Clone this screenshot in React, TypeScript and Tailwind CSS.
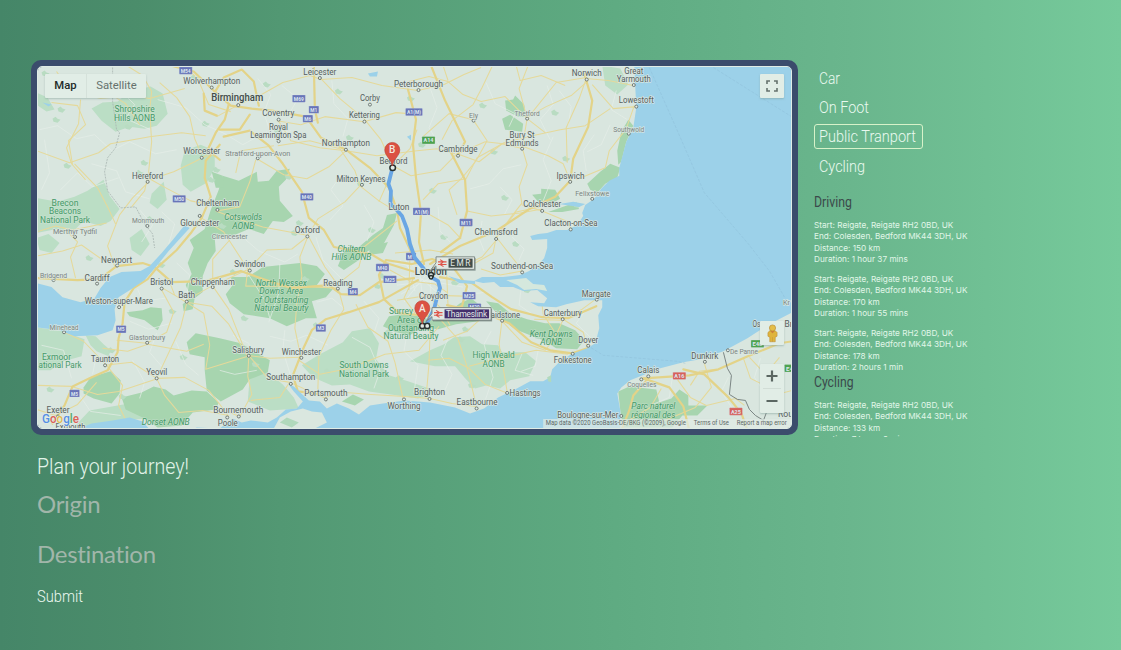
import React from "react";

type Label = [text: string, x: number, y: number, width: number, kind?: string];

const labels: Label[] = [
  ["Wolverhampton", 212, 84, 57], ["Birmingham", 237.5, 101.5, 52, "city"], ["Leicester", 320, 75, 33],
  ["Coventry", 278.5, 116.5, 32], ["Royal", 278.7, 130.5, 19], ["Leamington Spa", 278.5, 138.5, 56],
  ["Stratford-upon-Avon", 258, 156, 65, "minor"], ["Northampton", 346, 146, 48], ["Corby", 370, 101.5, 20],
  ["Kettering", 364.5, 118.5, 31], ["Peterborough", 418.5, 87.5, 49], ["Bedford", 393.5, 164.5, 28],
  ["Milton Keynes", 361, 182, 49], ["Luton", 399, 210, 21], ["Cambridge", 458, 152, 39], ["Ely", 473.5, 118.5, 9, "minor"],
  ["Thetford", 527, 116.5, 25, "minor"], ["Bury St", 522, 138, 25], ["Edmunds", 522, 145.8, 33],
  ["Norwich", 586.5, 76.5, 30], ["Great", 633.5, 74.5, 19], ["Yarmouth", 633.5, 82.5, 34], ["Lowestoft", 636, 103.5, 35],
  ["Southwold", 628.5, 132, 31, "minor"], ["Ipswich", 570.3, 179, 28], ["Felixstowe", 592, 196.5, 34, "minor"],
  ["Colchester", 542, 207, 38], ["Clacton-on-Sea", 570.7, 226.5, 53], ["Chelmsford", 496, 235.5, 43],
  ["Southend-on-Sea", 522, 269, 62], ["Margate", 596, 297, 29], ["Canterbury", 562.5, 316, 38],
  ["Maidstone", 502, 317.5, 36], ["Dover", 588, 342.5, 20], ["Folkestone", 572.5, 362.5, 38],
  ["Hastings", 525, 395.8, 31], ["Eastbourne", 477, 404.5, 41], ["Brighton", 429.5, 395, 31], ["Worthing", 404, 408.5, 33],
  ["Croydon", 433.5, 299, 29], ["London", 430.7, 275, 32, "city"], ["Worcester", 202, 154.5, 37],
  ["Hereford", 148, 179, 31], ["Monmouth", 148.5, 223, 32, "minor"], ["Merthyr Tydfil", 75.5, 233.8, 44, "minor"],
  ["Cheltenham", 218, 206.5, 43], ["Gloucester", 200, 226, 39], ["Cirencester", 230, 239.5, 36, "minor"],
  ["Oxford", 307.5, 233, 25], ["Newport", 117, 262.5, 31], ["Bridgend", 54, 277.5, 27, "minor"], ["Cardiff", 97.5, 280.5, 25],
  ["Bristol", 162, 285, 23], ["Chippenham", 213, 284.5, 44], ["Bath", 187, 298, 17], ["Swindon", 250, 267, 31],
  ["Reading", 338, 285.5, 29], ["Weston-super-Mare", 119.2, 304, 68], ["Minehead", 64.5, 330, 29, "minor"],
  ["Glastonbury", 147.5, 340, 36, "minor"], ["Taunton", 105.5, 362, 28], ["Yeovil", 157, 375, 21],
  ["Salisbury", 248.5, 352.5, 32], ["Winchester", 301.5, 354.5, 39], ["Southampton", 291, 380, 49],
  ["Portsmouth", 326, 395.5, 43], ["Bournemouth", 238.5, 412.5, 50], ["Poole", 228, 426, 20], ["Exeter", 58.5, 412.8, 23],
  ["Exmouth", 71, 429.5, 30], ["Calais", 648, 372.5, 22], ["Coquelles", 641.5, 387, 29, "minor"],
  ["Dunkirk", 704.5, 358.5, 27], ["De Panne", 743.5, 353.5, 28, "minor"], ["Boulogne-sur-Mer", 587.5, 418, 61],
  ["Os", 756, 327, 8], ["Br", 788, 327, 8], ["Kr", 786, 304.5, 7, "minor"], ["Rou", 785, 417, 15],
  ["Shropshire", 135, 112.5, 40, "park"], ["Hills AONB", 135, 121, 41, "park"],
  ["Brecon", 65.5, 206.5, 27, "park"], ["Beacons", 65.5, 214.5, 32, "park"], ["National Park", 65.5, 223, 50, "park"],
  ["Exmoor", 57, 359.5, 29, "park"], ["ational Park", 60.5, 368, 43, "park"],
  ["Cotswolds", 243.5, 220.5, 38, "italic"], ["AONB", 243.5, 229, 22, "italic"],
  ["Chiltern", 351.5, 251.5, 28, "italic"], ["Hills AONB", 351.5, 260, 40, "italic"],
  ["North Wessex", 281.5, 285.5, 51, "italic"], ["Downs Area", 281.5, 294, 44, "italic"],
  ["of Outstanding", 281.5, 302.5, 54, "italic"], ["Natural Beauty", 281.5, 310.8, 54, "italic"],
  ["Surrey", 401, 314, 24, "park"], ["Area of", 411, 322.5, 28, "park"],
  ["Outstanding", 411, 330.8, 46, "park"], ["Natural Beauty", 411, 339, 55, "park"],
  ["South Downs", 364, 368, 49, "park"], ["National Park", 364, 376.3, 50, "park"],
  ["High Weald", 493.5, 358, 42, "park"], ["AONB", 493.5, 366.3, 22, "park"],
  ["Kent Downs", 551, 336.5, 43, "italic"], ["AONB", 551, 345, 22, "italic"], ["Dorset AONB", 166, 425, 48, "italic"],
  ["Parc naturel", 653, 409, 44, "italic"], ["régional des", 653, 417.3, 44, "italic"],
];

const towns: [number, number][] = [
  [212, 88], [238.5, 105.5], [320, 78.5], [278.8, 120], [278.8, 141.5], [258, 158.5], [346, 150], [370, 105], [364.5, 122],
  [418.5, 90.5], [362, 185], [458, 156], [473.5, 121], [527, 119], [522, 149], [586.5, 80], [633.5, 85.5], [636, 107],
  [628.5, 134], [570, 182], [592, 199], [542, 211], [570.5, 229.5], [496, 239], [522, 272.3], [596.5, 299.5], [562.5, 319],
  [502, 320.5], [588, 345.5], [572.5, 353.5], [507, 392.5], [476.5, 408], [429.5, 398.5], [404, 399], [202, 158],
  [148, 182], [147.7, 226], [75.5, 237], [217.7, 210], [200, 216], [307.5, 236.5], [117.5, 265.5], [54, 280], [97.5, 283.5],
  [162, 288.5], [213, 287], [187, 301.5], [250, 270.5], [338, 288.5], [119.5, 307], [64.5, 332], [147.5, 342.5], [105.5, 365],
  [157, 378], [249, 355.5], [301.5, 357.5], [291, 383.5], [326, 399], [239, 416], [227.5, 417], [648, 376], [641, 379],
  [704.5, 361.5], [727.5, 350], [621, 415.5], [58.5, 416],
];

const water = [
  "M634 66L635 88L636 108L633 128L626 142L622 157L619 168L619 176L609 181L601 189L594 199L585 205L582 213L583 216L577 225L567 230L556 230L547 233L538 234L530 236L532 240L547 239L547 248L544 258L538 265L529 271L520 275L503 277L482 277L474 281L483 283L494 282L500 287L513 287L523 291L537 290L547 298L544 303L530 302L538 306L556 307L566 304L584 300L602 300L602 307L598 315L599 328L595 343L587 348L571 354L560 361L552 369L550 377L543 381L530 381L513 390L498 397L484 408L470 413L455 407L430 402L405 400L383 403L370 405L359 414L349 408L337 403L327 408L320 401L309 400L294 386L288 383L294 391L303 401L297 408L286 409L277 417L268 422L251 420L242 422L233 418L220 428L197 427L190 430H620L620 410L617 393L621 387L630 380L645 374L660 368L683 362L700 359L723 351L747 338L767 325L792 312V66Z",
  "M37 283L52 287L63 297L81 302L95 298L101 288L110 277L122 272L141 271L150 266L162 253L173 240L185 225L190 228L179 240L169 251L157 266L145 280L132 289L119 297L115 309L116 320L113 330L98 335L75 336L60 330L37 327Z",
  "M75 430L92 423L113 420L130 417L143 421L151 430Z",
];

const greens = [
  "M92 109L103 103L118 102L130 92L151 87L163 94L168 114L157 126L145 129L130 127L116 132L102 121Z",
  "M37 198L58 202L75 197L88 191L104 180L110 196L120 209L111 221L101 226L84 221L72 233L57 229L37 233Z",
  "M185 151L201 145L215 151L215 168L207 183L191 192L183 185L181 166Z",
  "M152 194L164 182L167 200L158 209L150 203Z",
  "M37 327L63 331L85 339L82 356L64 361L51 370L37 370Z",
  "M86 335L96 336L104 344L111 350L109 356L97 351L91 345Z",
  "M302 365L320 354L343 342L352 331L370 328L379 343L376 359L389 375L408 381L438 391L418 398L391 394L369 391L350 384L332 385L313 377Z",
  "M250 376L268 372L283 384L294 397L299 408L270 410L248 401Z",
  "M444 344L454 337L470 336L482 344L498 345L502 352L525 352L536 361L529 376L510 380L500 388L486 385L475 388L465 378L455 366L435 366L410 361L430 350Z",
  "M90 410L118 405L135 402L160 405L150 418L118 420L99 428L76 425Z",
  "M37 93L48 98L55 110L47 112L37 105Z",
  "M130 238L142 229L150 244L141 256L132 250Z",
  "M37 238L49 234L60 243L52 253L40 250Z",
  "M602 66L620 69L628 85L617 95L605 86Z",
];
const deepGreens = [
  "M219 190L223 176L239 181L257 172L258 182L269 181L277 171L290 169L286 180L279 187L280 201L293 216L284 222L273 221L264 234L249 229L230 237L215 238L216 251L208 263L203 276L203 292L195 298L193 309L184 311L183 304L191 297L186 285L192 274L188 263L194 248L190 240L205 229L211 210Z",
  "M226 294L233 285L231 277L248 277L263 267L300 263L317 266L325 274L317 285L333 289L326 297L312 301L317 318L306 318L287 326L270 318L244 314L230 303Z",
  "M187 342L196 333L220 338L241 343L270 360L268 372L250 379L243 389L221 401L207 390L205 370L205 357L190 354Z",
  "M122 397L142 392L154 386L166 389L174 395L192 390L207 391L219 402L216 409L193 412L182 425L158 427L145 418L126 409Z",
  "M84 387L91 377L111 371L121 380L120 393L112 403L94 398L84 393Z",
  "M127 312L143 310L151 307L162 308L163 320L158 330L145 320L130 316Z",
  "M338 266L344 251L359 247L373 235L383 228L387 215L397 213L394 225L383 245L368 251L359 260L344 270Z",
  "M383 326L389 316L403 314L419 316L435 321L447 313L460 303L471 298L486 310L478 321L456 324L438 329L421 327L410 335L396 332Z",
  "M486 301L498 303L510 313L527 319L545 323L559 323L575 330L584 340L577 349L556 348L543 340L530 335L515 329L502 319Z",
  "M587 184L600 172L610 164L620 168L617 178L605 184L597 193L590 190Z",
  "M532 195L541 194L541 189L555 190L560 199L550 204L538 202Z",
  "M505 101L513 100L515 96L524 105L526 117L518 117L506 111Z",
  "M502 119L510 115L523 124L522 132L505 130Z",
  "M618 391L629 386L656 389L659 402L671 398L679 389L688 395L688 405L707 405L697 415L682 415L672 427H623L620 410Z",
  "M342 401L353 394L364 399L355 405Z",
  "M628 120L633 126L626 142L621 162L618 165L617 151L621 132Z",
  "M212 172L223 176L224 188L216 188Z M370 247L388 242L383 253L369 255Z M548 212L568 205L575 204L579 209L562 212Z",
];

const motorways = [
  "M171 66L194 72L214 91L231 106L252 109L272 111L306 117L321 138L346 150L370 168L389 188L397 210L400 228L408 245L416 263",
  "M220 160L208 150L216 133L225 120L229 105",
  "M216 91L224 78L242 70L254 82L259 106M250 115L240 130L220 130",
  "M224 137L250 131L269 146L283 164L302 192L309 218L324 230L334 247L371 254L386 263L415 272",
  "M220 145L206 161L205 178L211 197L202 218L192 232L177 250L157 268L148 279L134 288L125 302L123 323L119 338L118 352L108 370L90 378L73 386L65 405L53 423",
  "M37 278L78 280L100 279L117 266L143 263L155 267L172 282L206 281L241 271L269 281L292 288L329 285L341 294L360 295L379 282L414 278",
  "M418 280L379 302L349 312L326 319L312 330L304 347L293 375L298 391L323 394",
  "M412 264L386 260L379 275L384 299L399 313L432 316L462 306L467 286L453 267L432 259Z",
  "M408 90L416 120L413 145L416 178L421 213L419 242L424 264",
  "M450 151L465 180L467 211L460 238L441 252",
  "M440 277L472 283L492 297L511 309L542 317L568 318L596 306",
  "M447 305L487 314L509 323L531 342L550 350L572 353L587 348",
  "M430 264L460 246L496 231L531 208L555 197L570 181L573 159L588 127L592 101L584 74",
  "M431 66L445 101L465 142L458 154",
  "M643 378L689 375L718 369L745 357L779 343L792 341",
  "M643 378L669 387L683 406L689 430M683 369L704 374L728 397L741 413L747 430",
  "M648 378L633 395L629 410L621 430M204 94L205 111L217 116M314 66L315 110L318 123",
];
const roads = [
  "M37 151L70 163L99 153L111 144L150 137L182 133L206 136M73 165L69 141L86 125L78 106L52 103M75 164L98 188L108 207L116 224M37 232L56 226L73 230L107 223",
  "M127 66L143 76L152 92L150 110L152 142L149 172L145 191L132 207M147 181L174 172L195 162L214 152M148 178L168 189L191 201L211 205M148 183L133 198L120 215L108 246L115 266",
  "M160 83L177 98L190 117L195 139L202 155M184 66L198 79L209 105L231 112M185 89L150 99L130 96L101 99L70 91L57 72",
  "M81 100L79 124L67 148L72 164L86 180M98 75L110 94L126 104L140 125M64 228L78 242L71 257L76 278M37 256L63 251L82 245L106 262",
  "M217 117L239 105L260 96L283 83L310 76L321 80L352 78L382 86L418 91L444 85L464 75L481 68M277 121L301 125L325 117L364 122L396 113L421 115",
  "M321 79L340 99L364 119L381 140L392 164M279 122L291 141L320 148L346 151L377 156L417 151M278 146L310 141L340 149L355 171L360 186L379 201L397 212",
  "M257 159L284 175L307 179L329 167L346 151M360 186L345 202L318 219L307 237L292 249L267 250L248 270M216 211L238 219L263 227L306 235",
  "M236 173L241 151L274 146M256 160L250 182L240 207L217 211M200 217L224 232L248 269L246 286L299 286L338 288M307 239L300 257L302 276L297 303L295 328L301 357",
  "M230 240L213 259L213 286L229 309L247 355M187 302L212 306L229 324L247 355L270 358L301 357M187 303L181 327L157 378M162 290L174 312L167 332L147 343L117 340",
  "M163 288L185 301L210 287L247 270M170 282L175 295L204 313L210 345L206 369L248 356M103 348L128 351L148 344L187 351L204 344M105 365L132 362L157 378L185 377L209 390L228 414",
  "M157 378L165 395L179 412L203 410L229 415M129 425L119 405L123 385L107 365L84 341L65 332M38 385L72 386L98 394L119 391L156 379M37 409L56 415L78 404L97 382",
  "M249 356L248 376L252 394L240 416L215 406M249 355L268 378L290 382L324 397L346 392L371 394L405 396L430 398L452 403L476 406",
  "M289 383L280 397L251 400M299 360L320 374L350 368L385 354L419 350L439 326M356 304L368 327L388 341L395 362L403 398M338 287L344 309L331 330L319 356L318 389",
  "M427 311L430 333L429 363L426 398M428 360L449 358L469 368L485 384L508 393M440 319L458 339L466 363L476 404M469 366L499 358L536 350L568 354M502 319L499 344L507 391",
  "M502 321L522 342L545 350L555 337L563 319L583 332L587 347M487 313L467 331L443 340M563 319L582 309L597 298M534 319L561 320L582 313M542 305L543 314L554 331",
  "M338 285L325 267L309 237M339 283L359 267L364 247L397 221M379 202L387 184L393 166L410 149L417 130M393 166L411 176L440 171L457 154L479 162L502 144L523 149",
  "M442 140L452 121L473 105L482 88L492 67M423 137L449 114L473 120L487 141L476 161L462 178M458 154L485 142L521 146L548 156L563 164L570 181M527 119L522 148L527 165L519 187L522 205L542 211",
  "M417 151L437 149L455 154M423 200L438 184L466 179L477 158L504 143L532 136L560 130L585 126L610 109M586 78L556 83L527 119M528 66L519 89L527 119L545 133",
  "M586 79L579 99L566 128L567 163M586 79L608 81L633 86M636 107L613 109L592 85M634 106L626 129L609 151L605 168L576 180M542 211L566 221L571 229M540 207L516 212L496 237L522 270",
  "M467 211L491 216L520 213L542 209M475 263L493 253L496 238L511 217L522 203M481 269L500 275L522 271M423 211L448 225L461 239M497 239L482 257L465 265M457 215L449 190L462 178",
  "M409 82L429 77L448 82L463 95L481 102L505 97L526 118L546 107L571 96L588 81M448 81L443 66M516 66L520 81L541 76L565 86",
  "M427 295L440 307L450 325M414 277L404 298L415 313M390 270L410 281L435 284L448 293M395 253L430 250L453 254M410 254L409 290M446 259L448 306M397 300L430 295L463 296",
  "M677 379L690 397L706 405L735 398L744 405M704 363L711 387L695 407L662 421M743 358L750 378L780 393L792 390M749 357L765 374L779 357M661 388L650 407L630 419M715 369L699 371L690 385",
];
const minor = [
  "M40 130L58 126L77 139L95 135L112 151L130 142L156 154L177 150M120 90L135 105L126 119L151 130M92 164L117 171L126 192L150 199M61 190L78 173L93 187L119 178M45 140L50 173L42 190",
  "M158 100L186 108L205 125L225 134L243 145L267 132M258 79L271 95L264 113L271 134L291 131M282 86L298 99L290 113M332 81L334 104L348 119L343 137M342 174L331 190L343 206L330 220",
  "M364 205L374 222L367 241M245 239L259 251L285 262L298 254M236 260L249 275L265 300L270 318M280 264L279 293L269 322M316 237L323 260L341 278M317 302L332 298L345 309",
  "M430 88L437 108L429 128L439 145M486 83L495 104L515 114L509 127M547 86L553 105L540 120L550 140M553 137L543 160L551 181L541 206M470 189L489 184L503 169L521 165M500 187L512 200L504 215",
  "M438 207L440 231L450 242M482 221L479 238L484 251M512 237L524 249L519 260M458 276L472 294L486 292M521 288L519 305L535 316M587 308L576 323L591 338M538 350L535 366L521 371",
  "M364 301L379 318L374 333M352 337L370 347L380 371L374 388M407 333L404 351L418 365L414 392M448 338L441 355L452 374L443 394M491 331L484 344L493 377L484 403M522 353L515 370L533 375",
  "M270 336L291 341L307 335L328 345M285 330L283 350L291 376M233 335L249 343L251 352M220 370L235 374L257 370M157 333L150 352L162 366M176 341L186 364L199 375M133 360L145 382L140 398",
  "M130 321L149 329L172 323M138 289L143 301L166 298M177 263L190 275L187 296M140 210L153 225L142 242M162 212L175 224L169 244M42 345L64 350L72 378M97 354L93 374M78 392L91 411L121 415",
  "M672 377L669 397L650 405M728 377L721 391L735 413M760 358L754 377L765 394M610 125L601 145L587 152M616 91L611 110L627 120M559 91L571 107L568 125M594 135L583 151L586 171",
  "M406 260L415 291M418 260L423 300M430 258L431 304M394 263L454 272M392 274L463 287M397 285L450 279M401 294L455 264M400 260L446 300M440 257L404 302",
];

const shields: [string, number, number, string?][] = [
  ["M54", 186, 71], ["M69", 299, 99], ["M1", 314, 110], ["M6", 308, 119], ["M40", 307, 197], ["M50", 179.5, 199],
  ["A1(M)", 414, 112.3], ["A14", 428.5, 140.5, "#4da34d"], ["A1(M)", 421.5, 211.5], ["M11", 466, 222.5], ["M1", 411, 256.5],
  ["M40", 382.5, 267.5], ["M25", 390, 279.3], ["M4", 353, 291.5], ["M3", 321, 327.8], ["M5", 121.5, 329], ["M5", 75, 393],
  ["M25", 469, 295.5], ["M20", 474.5, 307], ["A16", 679, 375.5, "#d7605b"], ["A25", 735.5, 411, "#d7605b"],
  ["E40", 757, 343.5, "#4da34d"], ["E4", 789, 368, "#4da34d"],
];

const kinds: Record<string, string> = {
  town: "fill-[#56605d] text-[8.6px]",
  minor: "fill-[#7b8582] text-[7.8px]",
  city: "fill-[#414b48] text-[10px] font-medium",
  park: "fill-[#459a68] text-[8.6px]",
  italic: "fill-[#459a68] text-[8.6px] italic",
};

function Pin({ x, y, letter }: { x: number; y: number; letter: string }) {
  return (
    <g>
      <path d={`M${x} ${y + 16}C${x - 1} ${y + 9} ${x - 7.5} ${y + 6} ${x - 7.5} ${y}A7.5 7.5 0 0 1 ${x + 7.5} ${y}C${x + 7.5} ${y + 6} ${x + 1} ${y + 9} ${x} ${y + 16}Z`} fill="#db5143" stroke="#b94338" strokeWidth=".6" />
      <text x={x} y={y + 3.4} textAnchor="middle" className="fill-[#f2e8e0] text-[10px] font-medium">{letter}</text>
    </g>
  );
}

function RailTag({ x, y, w, name, dark, spacing }: { x: number; y: number; w: number; name: string; dark: string; spacing: number }) {
  return (
    <g>
      <rect x={x + 1} y={y + 1.3} width={w} height="12.5" fill="#52625f" opacity=".6" />
      <path d={`M${x} ${y}H${x + w}V${y + 12.5}H${x}V${y + 9}L${x - 6} ${y + 14}L${x} ${y + 6}Z`} fill="#e1e9e4" stroke="#78837f" strokeWidth=".9" />
      <path d={`M${x + 2} ${y + 5}h8.5M${x + 2} ${y + 7.6}h8.5M${x + 4} ${y + 2.8}l3.5 2.2l-3.5 2.6l3.5 2.2`} fill="none" stroke="#df5348" strokeWidth="1.1" />
      <rect x={x + 12.5} y={y + 1.8} width={w - 14.5} height="9" fill={dark} />
      <text x={x + 12.5 + (w - 15) / 2} y={y + 9.2} textAnchor="middle" textLength={spacing} className="fill-[#e2e9e6] text-[8.3px]">{name}</text>
    </g>
  );
}

function MapDrawing() {
  return (
    <svg viewBox="38.5 67.5 752 360" preserveAspectRatio="none" className="block h-full w-full font-['Roboto',sans-serif]">
      <rect x="37" y="66" width="757" height="366" fill="#d9e6df" />
      <g fill="#bbdec5">{greens.map((d) => <path key={d} d={d} />)}</g>
      <g fill="#a7d5af">{deepGreens.map((d) => <path key={d} d={d} />)}</g>
      <g fill="#b9dcc2">
        {Array.from({ length: 64 }, (_, i) => (
          <path key={i} d={`M${42 + ((i * 83) % 570)} ${73 + ((i * 53) % 325)}l3 -2l2 2l3 1l-3 3l-4 -1z`} />
        ))}
      </g>
      <g fill="none" stroke="#e5eee8" strokeWidth=".7" strokeLinejoin="round">{minor.map((d) => <path key={d} d={d} />)}</g>
      <g fill="none" stroke="#e5d99a" strokeWidth="1.05" strokeLinejoin="round">{roads.map((d) => <path key={d} d={d} />)}</g>
      <g fill="none" stroke="#e3d388" strokeWidth="2.2" strokeLinejoin="round" strokeLinecap="round">{motorways.map((d) => <path key={d} d={d} />)}</g>
      <g fill="#9cd1e9">
        {water.map((d) => <path key={d} d={d} />)}
        <path d="M559 204L573 202L585 204L579 207L565 205ZM448 276L462 280L475 281L475 284L459 283ZM368 74L378 72L377 77L370 77ZM407 137L411 135L411 141ZM43 103L52 105L49 107ZM406 228L411 240L408 247Z" />
      </g>
      <path d="M274 428L280 417L291 411L303 408L312 411L322 412L327 422L315 428L300 430Z" fill="#dae7df" />
      <path d="M280 422L287 417L299 422L292 427ZM547 377l4 -2l0 7l-3 -1z" fill="#b1d9bc" />
      <path d="M506 280L526 278L533 284L544 285L547 291L536 289L524 290L517 285Z" fill="#d5e8dd" />
      <path d="M649 68L677 131L704 193L748 244L769 271L784 297M713 68L791 117M587 345L603 355L677 361L685 363" fill="none" stroke="#8fbfd9" strokeWidth=".5" strokeDasharray="3 1.5" />
      <path d="M113 68V102L117 130L120 133L116 148L108 158L105 172L108 191L121 208L136 207L145 224L153 234L155 248" fill="none" stroke="#a9b5b1" strokeWidth=".8" strokeDasharray="2 1" />
      <path d="M723 352L727 368L731 375L729 394L737 399L745 400L749 409L755 415L763 420L766 412" fill="none" stroke="#707b79" strokeWidth=".9" />
      {shields.map(([name, x, y, color], i) => {
        const w = name.length === 2 ? 10 : name.length === 5 ? 17 : 13;
        return (
          <g key={i}>
            <rect x={x - w / 2} y={y - 3.7} width={w} height="7.4" rx=".7" fill={color ?? "#6874b8"} stroke="#d5dfeb" strokeWidth=".3" />
            <text x={x} y={y + 2.2} textAnchor="middle" textLength={w - 3} lengthAdjust="spacingAndGlyphs" className="fill-[#dce5ef] text-[6px] font-bold">{name}</text>
          </g>
        );
      })}
      <g fill="#e3ece7" stroke="#65706c" strokeWidth=".9">{towns.map(([x, y], i) => <circle key={i} cx={x} cy={y} r="1.5" />)}</g>
      <path d="M392.5 168L390 178L388.5 184L391 191L390.5 204L396 209L402 216L407 229L410 244L415 258L424 269L431 277L438 281L440 288L437 297L434 309L429 319L426 325" fill="none" stroke="#69a6e4" strokeWidth="3.8" strokeLinejoin="round" />
      <g stroke="#dce8e2" strokeWidth="1.6" strokeLinejoin="round">
        {labels.map(([text, x, y, width, kind], i) => (
          <text key={i} x={x} y={y} textAnchor="middle" textLength={width} lengthAdjust="spacingAndGlyphs" paintOrder="stroke" strokeOpacity={kind === "park" || kind === "italic" ? 0.35 : 0.9} className={kinds[kind ?? "town"]}>{text}</text>
        ))}
      </g>
      <g fill="#e0e9e4" stroke="#2a3330" strokeWidth="1.5">
        <circle cx="392.7" cy="168" r="2.8" /><circle cx="422.3" cy="325.7" r="2.6" /><circle cx="427.2" cy="325.7" r="2.6" />
        <circle cx="431" cy="275" r="2.5" /><circle cx="431" cy="277.2" r="1.7" />
      </g>
      <RailTag x={436} y={256.8} w={38.5} name="EMR" dark="#424e4b" spacing={20} />
      <RailTag x={432} y={307.4} w={59} name="Thameslink" dark="#43306d" spacing={41} />
      <Pin x={392.3} y={150.2} letter="B" />
      <Pin x={422.3} y={308} letter="A" />
      <text x="42.5" y="422.9" textLength="37" lengthAdjust="spacingAndGlyphs" stroke="#e4eee8" strokeWidth="1.2" paintOrder="stroke" className="text-[13px] font-medium">
        <tspan fill="#568fe3">G</tspan><tspan fill="#db6258">o</tspan><tspan fill="#e0bc50">o</tspan><tspan fill="#568fe3">g</tspan><tspan fill="#59ab70">l</tspan><tspan fill="#db6258">e</tspan>
      </text>
      <rect x="543" y="418.5" width="248" height="9.5" fill="#dfeae4" opacity=".72" />
      <g className="fill-[#5d6865] text-[6.4px]">
        <text x="545.5" y="424.4" textLength="140" lengthAdjust="spacingAndGlyphs">Map data ©2020 GeoBasis-DE/BKG (©2009), Google</text>
        <text x="693.5" y="424.4" textLength="35" lengthAdjust="spacingAndGlyphs">Terms of Use</text>
        <text x="736.3" y="424.4" textLength="50" lengthAdjust="spacingAndGlyphs">Report a map error</text>
      </g>
    </svg>
  );
}

function MapControls() {
  return (
    <>
      <div className="absolute left-[7px] top-[7px] flex h-6 w-[101px] rounded-[1px] bg-[#e1ede6] font-['Roboto',sans-serif] text-[11.3px] leading-6 shadow-[0_1px_2px_#87a29b88]">
        <button className="w-[42px] border-r border-[#d5e1da] text-center font-medium text-[#222a28]">Map</button>
        <button className="flex-1 text-center text-[#66716d]">Satellite</button>
      </div>
      <button aria-label="Fullscreen" className="absolute right-[7px] top-[7px] flex size-6 items-center justify-center rounded-[1px] bg-[#e1ede6] shadow-[0_1px_2px_#809d9a88]">
        <svg viewBox="0 0 12 12" className="size-3" fill="none" stroke="#65716d" strokeWidth="1.6"><path d="M1 4V1h3M8 1h3v3M11 8v3H8M4 11H1V8" /></svg>
      </button>
      <button aria-label="Street View" className="absolute bottom-[83px] right-[7px] flex size-6 items-center justify-center rounded-[1px] bg-[#e1ede6] shadow-[0_1px_2px_#809d9a88]">
        <svg viewBox="0 0 12 20" className="h-[19px] w-[11px]">
          <path d="M3 7L1 9V13L3 14V19H9V14L11 13V9L9 7Z" fill="#dfb43d" stroke="#bc8e38" strokeWidth=".6" />
          <circle cx="6" cy="4" r="3.4" fill="#e4be48" stroke="#b98b36" strokeWidth=".7" /><path d="M4 7.5h4l-2 2zM6 14v5" fill="#d46b43" stroke="#bc8e38" strokeWidth=".5" />
        </svg>
      </button>
      <div className="absolute bottom-[15px] right-[7px] flex h-[49px] w-6 flex-col items-center rounded-[1px] bg-[#e1ede6] shadow-[0_1px_2px_#809d9a88]">
        <button aria-label="Zoom in" className="flex h-6 w-full items-center justify-center"><svg viewBox="0 0 12 12" className="size-3" stroke="#5b6762" strokeWidth="2.2"><path d="M.5 6h11M6 .5v11" /></svg></button>
        <div className="h-px w-[18px] bg-[#d1ddd6]" />
        <button aria-label="Zoom out" className="flex h-6 w-full items-center justify-center"><svg viewBox="0 0 12 12" className="size-3" stroke="#5b6762" strokeWidth="2.2"><path d="M.5 6h11" /></svg></button>
      </div>
    </>
  );
}

function Narrow({ text, width, size }: { text: string; width: number; size: number }) {
  return (
    <svg role="presentation" width={width} height={size * 1.3} className="block overflow-visible">
      <text x="0" y={size} fontSize={size} textLength={width} lengthAdjust="spacingAndGlyphs" fill="currentColor">{text}</text>
    </svg>
  );
}

const modes = [["Car", 21], ["On Foot", 50], ["Public Tranport", 97], ["Cycling", 46]] as const;

function Route({ distance, duration }: { distance: string; duration: string }) {
  return (
    <p className="mb-[8px] whitespace-nowrap text-[8.22px] leading-[11.5px] text-[#e0f6e8]">
      Start: Reigate, Reigate RH2 0BD, UK<br />End: Colesden, Bedford MK44 3DH, UK<br />Distance: {distance}<br />Duration: {duration}
    </p>
  );
}

export default function App() {
  return (
    <main className="h-[650px] w-[1121px] overflow-hidden bg-[linear-gradient(90deg,#458668_0%,#4b8d6b_12%,#529873_25%,#5eaa81_53%,#6ab68d_76%,#76ca9b_100%)] pl-[31px] pt-[60px] font-['Inter',sans-serif]">
      <div className="flex h-[375px]">
        <section className="h-[375px] w-[767px] shrink-0 rounded-[10px] bg-[#3b4c6c] p-[6px]">
          <div className="relative h-full w-full overflow-hidden rounded-[5px] border-[1.5px] border-[#e0ece5]">
            <MapDrawing />
            <MapControls />
          </div>
        </section>
        <aside className="ml-4 h-[377px] w-[180px] overflow-hidden font-['Inter',sans-serif]">
          <nav className="flex flex-col items-start gap-1 pt-[5px] font-['Roboto',sans-serif] font-light text-[#e9f9ef]">
            {modes.map(([name, width]) => (
              <button key={name} className={name === "Public Tranport" ? "h-[25.4px] rounded-[3px] border border-[#d7f2c9] pl-[4px] pr-[6px]" : "h-[25.4px] border border-transparent pl-[4px] pr-[6px]"}>
                <Narrow text={name} width={width} size={17} />
              </button>
            ))}
          </nav>
          <h2 className="mt-[13px] h-[28px] font-['Roboto',sans-serif] text-[#3b4a4b]"><Narrow text="Driving" width={38} size={15} /></h2>
          <Route distance="150 km" duration="1 hour 37 mins" />
          <Route distance="170 km" duration="1 hour 55 mins" />
          <Route distance="178 km" duration="2 hours 1 min" />
          <h2 className="-mt-[10px] h-[28px] font-['Roboto',sans-serif] text-[#3b4a4b]"><Narrow text="Cycling" width={39.5} size={15} /></h2>
          <Route distance="133 km" duration="7 hours 8 mins" />
        </aside>
      </div>
      <form className="flex w-[300px] flex-col items-start pl-[6px] pt-[17px]" onSubmit={(event) => event.preventDefault()}>
        <h1 className="h-[34px] font-['Roboto',sans-serif] font-light text-[#e2f4e9]"><Narrow text="Plan your journey!" width={152} size={21.5} /></h1>
        <input aria-label="Origin" placeholder="Origin" className="h-[36px] w-full bg-transparent font-['Lato',sans-serif] text-[24px] tracking-[-0.3px] outline-none [font-variant-ligatures:none] placeholder:text-[#a1b6aa]" />
        <input aria-label="Destination" placeholder="Destination" className="mt-[14px] h-[36px] w-full bg-transparent font-['Lato',sans-serif] text-[24px] tracking-[-0.3px] outline-none [font-variant-ligatures:none] placeholder:text-[#a1b6aa]" />
        <button className="mt-[13px] font-['Roboto',sans-serif] font-light text-[#ebf8f0]"><Narrow text="Submit" width={46} size={17} /></button>
      </form>
    </main>
  );
}
